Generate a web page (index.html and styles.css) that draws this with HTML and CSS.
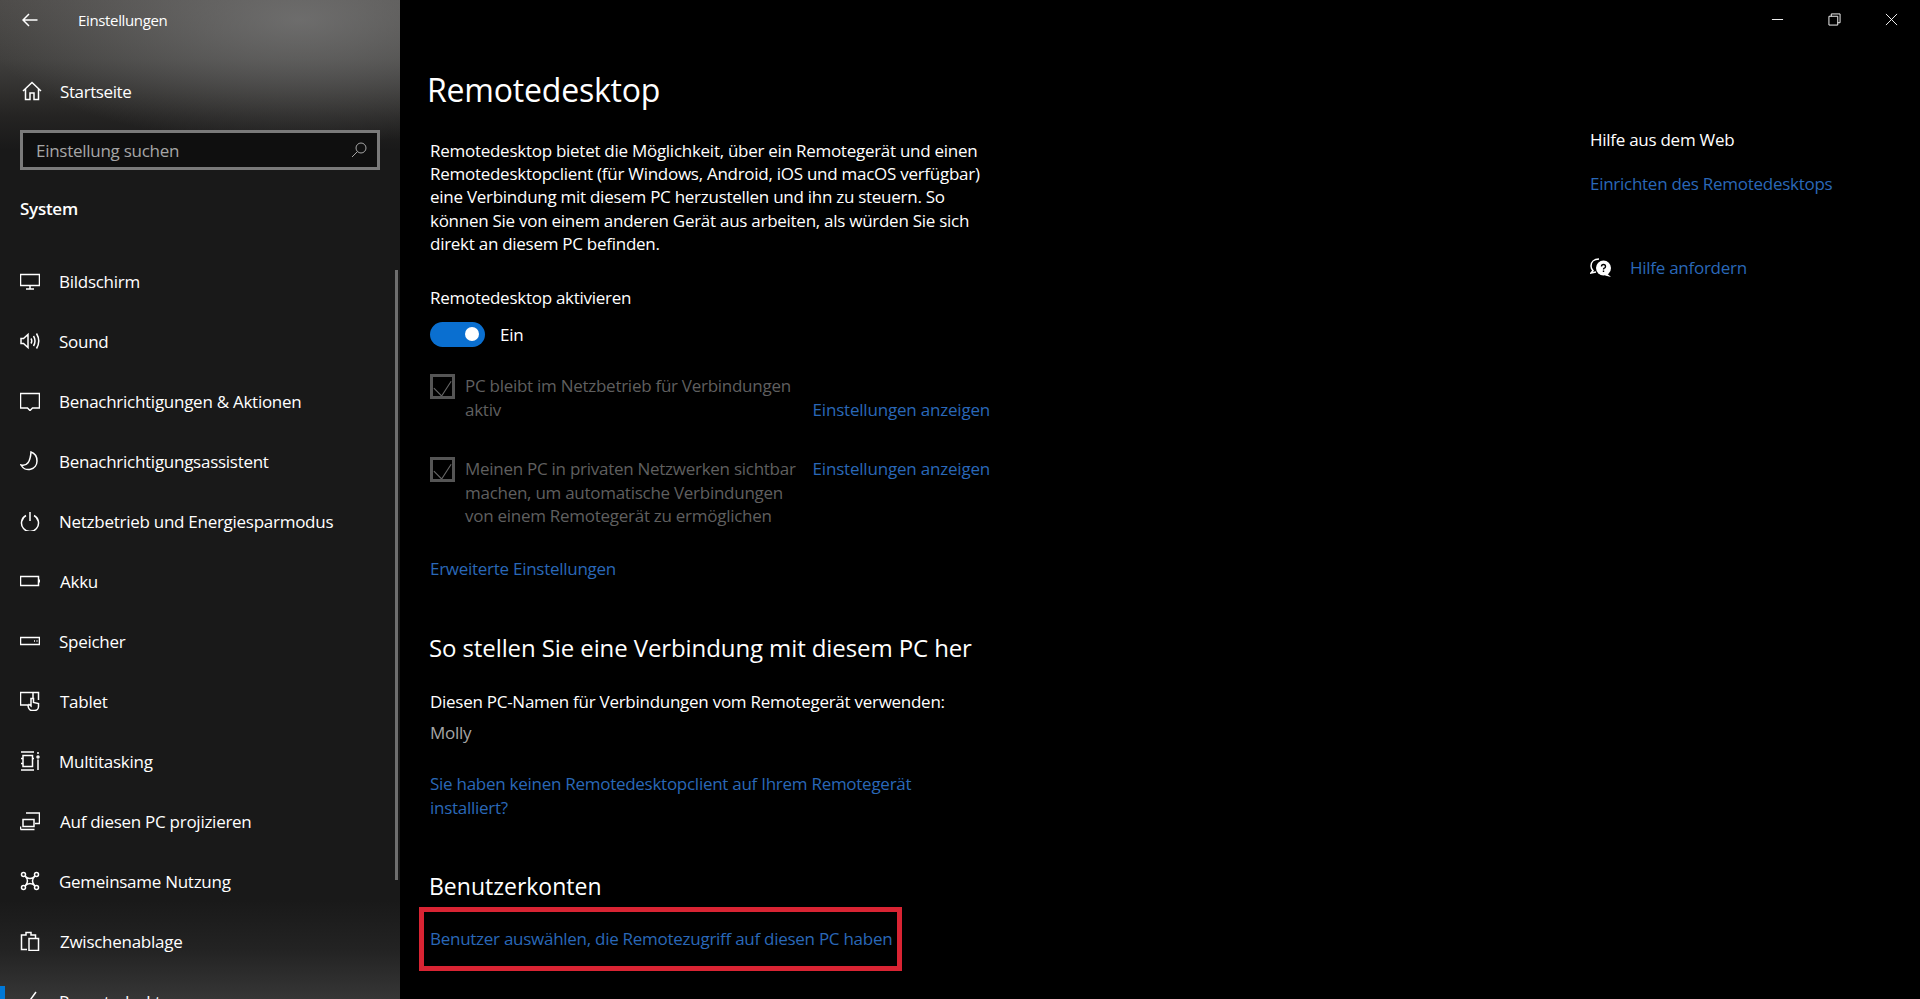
FILE: index.html
```html
<!DOCTYPE html>
<html lang="de">
<head>
  <meta charset="UTF-8" />
  <title>Einstellungen</title>
  <link rel="stylesheet" href="styles.css">
</head>
<body>
  <div class="app">
    <aside class="sidebar">
      <div class="titlebar">
        <svg class="back" viewBox="0 0 16 14"><path d="M15.500 7H1M7 1 1 7l6 6"/></svg>
        <span>Einstellungen</span>
      </div>
      <a class="home">
        <svg class="icon" viewBox="0 0 20 20"><path d="M1 10 10 1.500 19 10M3.500 8v10.500h4.500v-6.500h4v6.500h4.500V8"/></svg>
        <span>Startseite</span>
      </a>
      <div class="search">
        <span>Einstellung suchen</span>
        <svg viewBox="0 0 16 16"><circle cx="10" cy="6" r="5"/><path d="M6.500 9.500 1 15"/></svg>
      </div>
      <div class="group-title">System</div>
      <div class="scrollbar"></div>
      <nav class="menu">
        <a class="item"><svg class="icon" viewBox="0 0 20 20"><path d="M.5 3.500h19v11H.5zM10 14.500v3.500M6 18h8"/></svg><span>Bildschirm</span></a>
        <a class="item"><svg class="icon" viewBox="0 0 20 20"><path d="M1 7.500h2.500L8 3.500v13l-4.500-4H1zM11 7.500q1.500 2.500 0 5M13.500 5q3 5 0 10M16.500 2.500q4.500 7.500 0 15"/></svg><span>Sound</span></a>
        <a class="item"><svg class="icon" viewBox="0 0 20 20"><path d="M.5 2.500h19v14.500h-7L10 19.500 7.500 17H.5z"/></svg><span>Benachrichtigungen &amp; Aktionen</span></a>
        <a class="item"><svg class="icon" viewBox="0 0 20 20"><path d="M11 1q6 2 6 9a8.500 8.500 0 0 1-16 4q9 2 10-13z"/></svg><span>Benachrichtigungsassistent</span></a>
        <a class="item"><svg class="icon" viewBox="0 0 20 20"><path d="M6 4.500a8.500 8.500 0 1 0 8 0M10 1v9"/></svg><span>Netzbetrieb und Energiesparmodus</span></a>
        <a class="item item-wide"><svg class="icon" viewBox="0 0 20 20"><path d="M.5 5.500h18v9H.5zM19.500 8.500v3"/></svg><span>Akku</span></a>
        <a class="item"><svg class="icon" viewBox="0 0 20 20"><path d="M.5 6.500h19v7H.5zM14 10h1M16.500 10h1"/></svg><span>Speicher</span></a>
        <a class="item item-wide"><svg class="icon" viewBox="0 0 20 20"><path d="M8 14H.5V1.500h18V9M13 1.500V7M12 19.500c-2 0-3.500-1.500-4-5l1-1 2 1.500V7.500h2.500v4l5 1v3c0 2-1.500 4-4 4z"/></svg><span>Tablet</span></a>
        <a class="item"><svg class="icon" viewBox="0 0 20 20"><path d="M1 1h13M1 19h13M3 4.500h9.500v11H3zM1 7.500h2M1 12.500h2M12.500 7.500h1.500M18 1v2M18 8.500V19"/><circle cx="18" cy="6" r="1"/></svg><span>Multitasking</span></a>
        <a class="item item-wide"><svg class="icon" viewBox="0 0 20 20"><path d="M6 2h13.500v10.500H15M3 8.500h11v7H3zM.5 18.500h14M.5 15.500v3"/></svg><span>Auf diesen PC projizieren</span></a>
        <a class="item"><svg class="icon" viewBox="0 0 20 20"><circle cx="3.500" cy="3.500" r="2"/><circle cx="16.500" cy="3.500" r="2"/><circle cx="3.500" cy="16.500" r="2"/><circle cx="16.500" cy="16.500" r="2"/><path d="M5 5q5 5 10 0M5 15q5-5 10 0M5 5q5 5 0 10M15 5q-5 5 0 10"/></svg><span>Gemeinsame Nutzung</span></a>
        <a class="item item-wide"><svg class="icon" viewBox="0 0 20 20"><path d="M7 18.500H1.500V4H6V1.500h5V4h4.500v3M9 7.500h9.500v12H9z"/></svg><span>Zwischenablage</span></a>
        <a class="item active"><svg class="icon" viewBox="0 0 20 20"><path d="M1 9l6 5M16 1 8 12"/></svg><span>Remotedesktop</span></a>
      </nav>
    </aside>

    <main class="content">
      <h1>Remotedesktop</h1>
      <p class="intro">Remotedesktop bietet die Möglichkeit, über ein Remotegerät und einen Remotedesktopclient (für Windows, Android, iOS und macOS verfügbar) eine Verbindung mit diesem PC herzustellen und ihn zu steuern. So können Sie von einem anderen Gerät aus arbeiten, als würden Sie sich direkt an diesem PC befinden.</p>

      <div class="label">Remotedesktop aktivieren</div>
      <div class="toggle-row">
        <span class="toggle"></span>
        <span>Ein</span>
      </div>

      <div class="option option-first">
        <span class="check"><svg viewBox="0 0 22 22"><path d="M1 13l9 9L21 5"/></svg></span>
        <div class="option-text">PC bleibt im Netzbetrieb für Verbindungen aktiv</div>
        <a class="link option-link option-link-low">Einstellungen anzeigen</a>
      </div>
      <div class="option">
        <span class="check"><svg viewBox="0 0 22 22"><path d="M1 13l9 9L21 5"/></svg></span>
        <div class="option-text">Meinen PC in privaten Netzwerken sichtbar machen, um automatische Verbindungen von einem Remotegerät zu ermöglichen</div>
        <a class="link option-link">Einstellungen anzeigen</a>
      </div>
      <a class="link block advanced">Erweiterte Einstellungen</a>

      <h2>So stellen Sie eine Verbindung mit diesem PC her</h2>
      <div class="label">Diesen PC-Namen für Verbindungen vom Remotegerät verwenden:</div>
      <div class="pc-name">Molly</div>
      <a class="link block client-link">Sie haben keinen Remotedesktopclient auf Ihrem Remotegerät installiert?</a>

      <h2 class="accounts">Benutzerkonten</h2>
      <div class="highlight"><a class="link">Benutzer auswählen, die Remotezugriff auf diesen PC haben</a></div>
    </main>

    <div class="right">
      <div class="window-controls">
        <svg viewBox="0 0 14 14"><path d="M1 7h12"/></svg>
        <svg viewBox="0 0 14 14"><path d="M1 3.500h9.500V13H1zM3.500 3.500V1H13v9.500h-2.500"/></svg>
        <svg viewBox="0 0 14 14"><path d="M1 1l12 12M13 1 1 13"/></svg>
      </div>
      <div class="help-title">Hilfe aus dem Web</div>
      <a class="link block">Einrichten des Remotedesktops</a>
      <div class="help-row">
        <svg viewBox="0 0 22 20"><path class="bubble-back" d="M9 1C4 1 1 4 1 8c0 2 1 3.500 2 4.500L1 15l5-1"/><circle class="bubble-front" cx="13.500" cy="10" r="7.500"/><path class="bubble-front" d="M17 15.500l4 3.500-6-1.500z"/><path class="bubble-mark" d="M11.500 8.500q0-2 2-2t2 2q0 1.200-1.200 1.700-.8.4-.8 1.300M13.500 12.500v1.500"/></svg>
        <a class="link">Hilfe anfordern</a>
      </div>
    </div>
  </div>
</body>
</html>
```

FILE: styles.css
```css
html, body {
  margin: 0;
  height: 100%;
  overflow: hidden;
}

body {
  background: #000;
  color: #fff;
  font-family: 'Open Sans', 'Noto Sans', sans-serif;
  font-size: 17px;
  letter-spacing: -0.27px;
}

.app {
  display: flex;
  height: 999px;
  overflow: hidden;
}

svg {
  fill: none;
  stroke: #fff;
  stroke-width: 1.5;
  flex: none;
}

/* sidebar */
.sidebar {
  position: relative;
  flex: none;
  width: 400px;
  height: 999px;
  overflow: hidden;
  background:
    radial-gradient(ellipse 320px 125px at 300px 20px, rgba(125,125,125,0.7), rgba(125,125,125,0) 100%),
    linear-gradient(180deg, #4c4a48 0, #403f3d 60px, #252423 115px, #191919 150px, #191919 900px, #232323 950px, #363636 999px);
}

.titlebar {
  display: flex;
  align-items: center;
  height: 40px;
  padding-left: 22px;
  font-size: 15px;
  letter-spacing: -0.35px;
}

.back {
  width: 16px;
  height: 14px;
  margin-right: 40px;
}

.home {
  display: flex;
  align-items: center;
  gap: 18px;
  height: 30px;
  margin-top: 36px;
  padding-left: 22px;
  letter-spacing: -0.4px;
}

.icon {
  width: 20px;
  height: 20px;
}

.search {
  display: flex;
  align-items: center;
  justify-content: space-between;
  box-sizing: border-box;
  width: 360px;
  height: 40px;
  margin: 24px 0 0 20px;
  padding: 0 10px 0 13px;
  border: 3px solid #7a7a7a;
  background: #0f0f0f;
  color: #a6a6a6;
}

.search svg {
  width: 16px;
  height: 16px;
  stroke: #a6a6a6;
  stroke-width: 1;
}

.group-title {
  margin: 27px 0 0 20px;
  font-size: 17px;
  font-weight: 600;
  line-height: 24px;
}

.scrollbar {
  position: absolute;
  top: 270px;
  left: 395px;
  width: 3px;
  height: 610px;
  background: #6e6e6e;
}

.menu {
  margin-top: 30px;
}

.item {
  position: relative;
  display: flex;
  align-items: center;
  gap: 19px;
  height: 60px;
  padding-left: 20px;
}

.item-wide {
  gap: 20px;
}

.active::before {
  content: "";
  position: absolute;
  top: 15px;
  left: 0;
  width: 5px;
  height: 30px;
  background: #0078d7;
}

/* main column */
.content {
  flex: none;
  width: 1190px;
  padding-left: 30px;
  box-sizing: border-box;
}

h1 {
  margin: 66px 0 0 -3px;
  font-size: 32px;
  font-weight: 400;
  line-height: 48px;
  letter-spacing: -0.2px;
}

.intro {
  width: 570px;
  margin: 25px 0 0;
  line-height: 23.2px;
}

.label {
  margin-top: 31px;
  line-height: 24px;
}

.toggle-row {
  display: flex;
  align-items: center;
  gap: 15px;
  margin-top: 12px;
  height: 24px;
}

.toggle {
  position: relative;
  width: 55px;
  height: 25px;
  border-radius: 13px;
  background: #0a6fd0;
}

.toggle::after {
  content: "";
  position: absolute;
  top: 5px;
  right: 6px;
  width: 14px;
  height: 14px;
  border-radius: 50%;
  background: #fff;
}

.option {
  display: flex;
  align-items: flex-start;
  margin-top: 36px;
  width: 560px;
  color: #5f5f5f;
  line-height: 23.6px;
}

.option-first {
  margin-top: 28px;
}

.check {
  flex: none;
  box-sizing: border-box;
  width: 25px;
  height: 25px;
  margin: 0 10px 0 0;
  border: 3px solid #555;
}

.check svg {
  display: block;
  width: 19px;
  height: 19px;
  stroke: #666;
  stroke-width: 1.3;
}

.option-text {
  width: 340px;
  flex: none;
}

.option-link {
  margin-left: auto;
  white-space: nowrap;
  letter-spacing: -0.2px;
}

.option-link-low {
  align-self: flex-end;
}

.link {
  color: #2a68b8;
}

.block {
  display: block;
}

.advanced {
  margin-top: 29px;
  line-height: 24px;
}

h2 {
  margin: 49px 0 0 -1px;
  font-size: 24px;
  font-weight: 400;
  line-height: 36px;
  letter-spacing: -0.1px;
}

h2 + .label {
  margin-top: 24px;
}

.pc-name {
  margin-top: 7px;
  color: #a6a6a6;
  line-height: 24px;
}

.client-link {
  width: 520px;
  margin-top: 27px;
  line-height: 24px;
}

.accounts {
  margin: 48px 0 0 -1px;
  font-size: 23px;
  letter-spacing: 0;
}

.highlight {
  display: inline-block;
  box-sizing: border-box;
  height: 64px;
  margin: 3px 0 0 -11px;
  padding: 0 5px 0 6px;
  border: 5px solid #d92433;
  line-height: 54px;
  white-space: nowrap;
}

/* help column */
.right {
  flex: 1;
  line-height: 24px;
}

.window-controls {
  display: flex;
  justify-content: flex-end;
  gap: 44px;
  height: 40px;
  padding: 13px 22px 0 0;
  box-sizing: border-box;
}

.window-controls svg {
  width: 13px;
  height: 13px;
  stroke-width: 1;
}

.help-title {
  margin-top: 88px;
}

.right .link.block {
  margin-top: 20px;
}

.help-row {
  display: flex;
  align-items: center;
  gap: 18px;
  margin-top: 60px;
}

.help-row svg {
  width: 22px;
  height: 20px;
}

.bubble-back {
  stroke-width: 1.5;
}

.bubble-front {
  fill: #fff;
  stroke: none;
}

.bubble-mark {
  stroke: #000;
  stroke-width: 1.4;
}
```
